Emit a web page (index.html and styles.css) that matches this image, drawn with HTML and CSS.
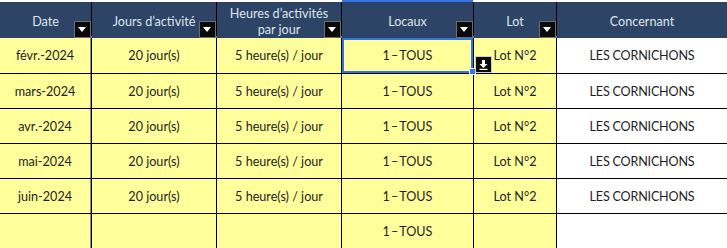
FILE: index.html
```html
<!DOCTYPE html>
<html lang="fr">
<head>
<meta charset="utf-8">
<link rel="stylesheet" href="styles.css">
</head>
<body>
<div class="sheet">
  <div class="row head">
    <div class="cell hc c-date"><span>Date</span><i class="dd"></i></div>
    <div class="cell hc"><span>Jours d’activité</span><i class="dd"></i></div>
    <div class="cell hc two"><span>Heures d’activités<br>par jour</span><i class="dd"></i></div>
    <div class="cell hc sel-col"><span>Locaux</span><i class="dd"></i></div>
    <div class="cell hc"><span>Lot</span><i class="dd"></i></div>
    <div class="cell hc"><span>Concernant</span></div>
  </div>
  <div class="row data first">
    <div class="cell y c-date">févr.-2024</div>
    <div class="cell y">20 jour(s)</div>
    <div class="cell y">5 heure(s) / jour</div>
    <div class="cell y selected"><span class="tous">1 – TOUS</span><b class="handle"></b><i class="vbtn"><svg width="9" height="10" viewBox="0 0 9 10"><path d="M3 0h3v4h2.5L4.5 8 0.5 4H3z" fill="#fff"/><rect x="0.5" y="8.8" width="8" height="1.2" fill="#fff"/></svg></i></div>
    <div class="cell y">Lot N°2</div>
    <div class="cell w caps">LES CORNICHONS</div>
  </div>
  <div class="row data">
    <div class="cell y c-date">mars-2024</div>
    <div class="cell y">20 jour(s)</div>
    <div class="cell y">5 heure(s) / jour</div>
    <div class="cell y"><span class="tous">1 – TOUS</span></div>
    <div class="cell y">Lot N°2</div>
    <div class="cell w caps">LES CORNICHONS</div>
  </div>
  <div class="row data">
    <div class="cell y c-date">avr.-2024</div>
    <div class="cell y">20 jour(s)</div>
    <div class="cell y">5 heure(s) / jour</div>
    <div class="cell y"><span class="tous">1 – TOUS</span></div>
    <div class="cell y">Lot N°2</div>
    <div class="cell w caps">LES CORNICHONS</div>
  </div>
  <div class="row data">
    <div class="cell y c-date">mai-2024</div>
    <div class="cell y">20 jour(s)</div>
    <div class="cell y">5 heure(s) / jour</div>
    <div class="cell y"><span class="tous">1 – TOUS</span></div>
    <div class="cell y">Lot N°2</div>
    <div class="cell w caps">LES CORNICHONS</div>
  </div>
  <div class="row data">
    <div class="cell y c-date">juin-2024</div>
    <div class="cell y">20 jour(s)</div>
    <div class="cell y">5 heure(s) / jour</div>
    <div class="cell y"><span class="tous">1 – TOUS</span></div>
    <div class="cell y">Lot N°2</div>
    <div class="cell w caps">LES CORNICHONS</div>
  </div>
  <div class="row data last">
    <div class="cell y c-date"></div>
    <div class="cell y"></div>
    <div class="cell y"></div>
    <div class="cell y"><span class="tous">1 – TOUS</span></div>
    <div class="cell y"></div>
    <div class="cell w"></div>
  </div>
</div>
</body>
</html>
```

FILE: styles.css
```css
html, body {
  margin: 0;
  padding: 0;
  background: #ffffff;
}
body {
  font-family: Lato, "Liberation Sans", sans-serif;
  font-size: 12.6px;
  color: #1e1e1e;
}
.sheet {
  width: 727px;
  height: 248px;
  overflow: hidden;
  padding-top: 2px;
  box-sizing: border-box;
}
.row {
  display: grid;
  grid-template-columns: 91px 124px 124px 131px 82px 170px;
  column-gap: 1px;
  background: #000;
}
.cell {
  display: flex;
  align-items: center;
  justify-content: center;
  text-align: center;
  position: relative;
}
.head {
  height: 34px;
  border-bottom: 2px solid #7a7a7a;
}
.hc {
  background: #2d4466;
  color: #dde4ec;
  padding-top: 3px;
  box-sizing: border-box;
}
.hc.two {
  line-height: 16px;
  padding-top: 4px;
  padding-bottom: 0;
}
.sel-col::before {
  content: "";
  position: absolute;
  left: 0;
  right: 0;
  top: -2px;
  height: 2px;
  background: #3474e0;
}
.dd {
  position: absolute;
  right: 0;
  bottom: 0;
  width: 17px;
  height: 17px;
  box-sizing: border-box;
  background: #0a0a0a;
  border: 1px solid #6d6d6d;
}
.dd::after {
  content: "";
  position: absolute;
  left: 3px;
  top: 5px;
  border-left: 4.5px solid transparent;
  border-right: 4.5px solid transparent;
  border-top: 5px solid #ffffff;
}
.data {
  height: 34px;
  border-top: 1px solid #000;
}
.data.first {
  height: 35px;
  border-top: none;
}
.y {
  background: #ffff9c;
}
.w {
  background: #ffffff;
}
.caps {
  letter-spacing: -0.2px;
}
.tous {
  word-spacing: -2px;
}
.y.c-date {
  border-right: 1px solid #8a8a8a;
}
.selected {
  outline: 2px solid #3474e0;
  outline-offset: -2px;
  z-index: 2;
}
.handle {
  position: absolute;
  right: -3px;
  bottom: -2px;
  width: 5px;
  height: 5px;
  background: #3474e0;
  border: 1px solid #fff;
}
.vbtn {
  position: absolute;
  left: calc(100% + 2px);
  bottom: 0px;
  width: 15px;
  height: 15px;
  background: #0a0a0a;
  border: 1px solid #d0d0d0;
  display: flex;
  align-items: center;
  justify-content: center;
}
```
